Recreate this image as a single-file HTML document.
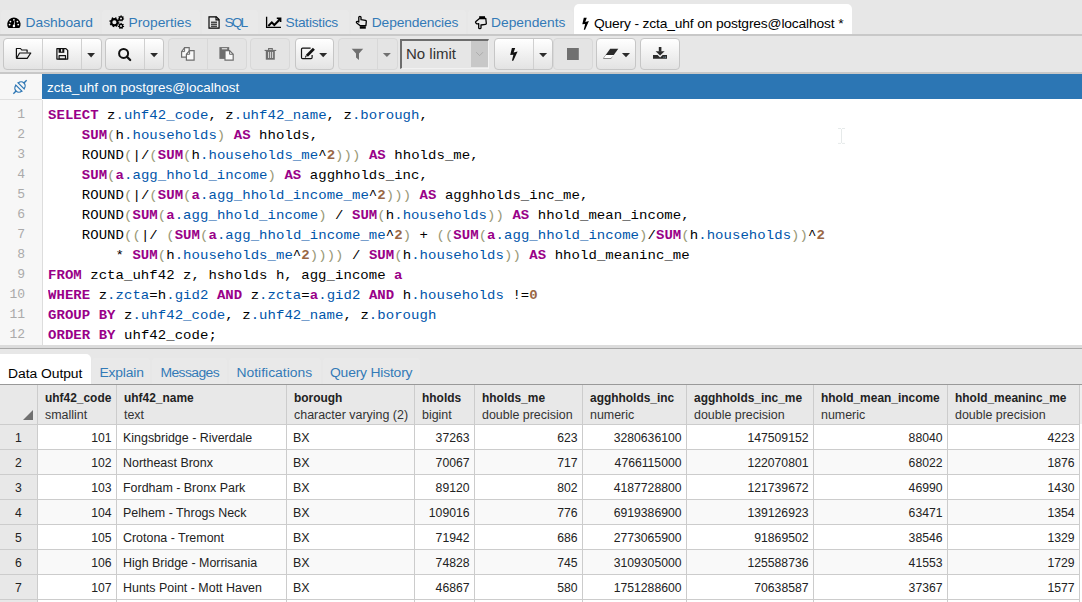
<!DOCTYPE html><html><head><meta charset="utf-8"><style>
*{box-sizing:border-box}
html,body{margin:0;padding:0}
body{width:1082px;height:602px;overflow:hidden;position:relative;background:#e7e7e7;font-family:"Liberation Sans", sans-serif;}
.a{position:absolute}
.t{position:absolute;white-space:pre;font-family:"Liberation Sans", sans-serif;}
.code{position:absolute;left:48px;white-space:pre;font-family:"Liberation Mono", monospace;font-size:14px;color:#000;letter-spacing:0.04px;transform:scaleY(0.9);transform-origin:0 13.7px}
.k{color:#990088;font-weight:bold}
.v{color:#0055aa}
.b{color:#999977}
.n{color:#996644;font-weight:bold}
.ln{position:absolute;width:25px;text-align:right;font-family:"Liberation Mono", monospace;font-size:13px;color:#aaa;margin-top:0px}
.btn{position:absolute;top:38px;height:32px;border:1px solid #c6c6c6;border-radius:4px;background:linear-gradient(#ffffff,#e3e3e3)}
.btnd{position:absolute;top:38px;height:32px;border:1px solid #d8d8d8;border-radius:4px;background:#e4e4e4}
.div{position:absolute;top:0;bottom:0;width:1px;background:#c6c6c6}
.hdr{position:absolute;top:385px;height:39px;background:#e8e8e8}
.cell{position:absolute;white-space:pre;font-family:"Liberation Sans", sans-serif;font-size:12.2px;color:#222}
</style></head><body><div class="a" style="left:0;top:0;width:1082px;height:34px;background:#e7e7e7"></div>
<div class="a" style="left:1px;top:10px;width:99px;height:24px;background:#e9e9e9;border-radius:4px 4px 0 0"></div>
<div class="a" style="left:102px;top:10px;width:98px;height:24px;background:#e9e9e9;border-radius:4px 4px 0 0"></div>
<div class="a" style="left:202px;top:10px;width:56px;height:24px;background:#e9e9e9;border-radius:4px 4px 0 0"></div>
<div class="a" style="left:260px;top:10px;width:89px;height:24px;background:#e9e9e9;border-radius:4px 4px 0 0"></div>
<div class="a" style="left:351px;top:10px;width:115px;height:24px;background:#e9e9e9;border-radius:4px 4px 0 0"></div>
<div class="a" style="left:468px;top:10px;width:105px;height:24px;background:#e9e9e9;border-radius:4px 4px 0 0"></div>
<div class="a" style="left:574px;top:4px;width:278px;height:30px;background:#fff;border-radius:5px 5px 0 0"></div>
<div class="a" style="left:0;top:34px;width:1082px;height:2px;background:#c8c8c8"></div>
<div class="t" style="left:25.5px;top:15px;font-size:13.8px;transform:scaleY(0.9);transform-origin:0 12.49px;color:#337ab7;letter-spacing:0px">Dashboard</div>
<div class="t" style="left:128.5px;top:15px;font-size:13.8px;transform:scaleY(0.9);transform-origin:0 12.49px;color:#337ab7;letter-spacing:0px">Properties</div>
<div class="t" style="left:224.5px;top:15px;font-size:13.8px;transform:scaleY(0.9);transform-origin:0 12.49px;color:#337ab7;letter-spacing:-2px">SQL</div>
<div class="t" style="left:285.5px;top:15px;font-size:13.8px;transform:scaleY(0.9);transform-origin:0 12.49px;color:#337ab7;letter-spacing:-0.28px">Statistics</div>
<div class="t" style="left:371.8px;top:15px;font-size:13.8px;transform:scaleY(0.9);transform-origin:0 12.49px;color:#337ab7;letter-spacing:-0.15px">Dependencies</div>
<div class="t" style="left:491px;top:15px;font-size:13.8px;transform:scaleY(0.9);transform-origin:0 12.49px;color:#337ab7;letter-spacing:0px">Dependents</div>
<div class="t" style="left:594px;top:16px;font-size:13.8px;transform:scaleY(0.9);transform-origin:0 12.49px;color:#000;letter-spacing:-0.155px">Query - zcta_uhf on postgres@localhost *</div>
<div class="a" style="left:0;top:72px;width:1082px;height:2px;background:#c8c8c8"></div>
<div class="btn" style="left:3px;width:99px"><div class="div" style="left:38px;background:#d0d0d0"></div><div class="div" style="left:77px;background:#d0d0d0"></div></div>
<div class="btn" style="left:105px;width:59px"><div class="div" style="left:38px;background:#d0d0d0"></div></div>
<div class="btnd" style="left:168px;width:79px"><div class="div" style="left:38px;background:#d8d8d8"></div></div>
<div class="btnd" style="left:250px;width:40px"></div>
<div class="btn" style="left:295px;width:39px"></div>
<div class="btnd" style="left:338px;width:60px"><div class="div" style="left:38px;background:#d8d8d8"></div></div>
<div class="btn" style="left:494px;width:59px"><div class="div" style="left:38px;background:#d0d0d0"></div></div>
<div class="btnd" style="left:553px;width:40px"></div>
<div class="btn" style="left:596px;width:40px"></div>
<div class="btn" style="left:640px;width:40px"></div>
<div class="a" style="left:400px;top:39px;width:89px;height:30px;background:#e6e6e6;border-top:2px solid #6d6d6d;border-left:2px solid #6d6d6d;border-right:1px solid #f2f2f2;border-bottom:1px solid #f2f2f2"></div>
<div class="a" style="left:471px;top:41px;width:17px;height:26px;background:#c8c8c8"></div>
<div class="t" style="left:406px;top:45px;font-size:15px;color:#333">No limit</div>
<div class="a" style="left:0;top:74px;width:42px;height:25px;background:#f7f7f7"></div>
<div class="a" style="left:42px;top:74px;width:1040px;height:25px;background:#2c76b4"></div>
<div class="t" style="left:47px;top:79.5px;font-size:13.5px;transform:scaleY(0.9);transform-origin:0 12.22px;color:#fff">zcta_uhf on postgres@localhost</div>
<div class="a" style="left:0;top:99px;width:42px;height:1px;background:#e0e0e0"></div>
<div class="a" style="left:42px;top:99px;width:1040px;height:246px;background:#fff"></div>
<div class="a" style="left:0;top:100px;width:43px;height:245px;background:#f7f7f7;border-right:1px solid #dddddd"></div>
<div class="ln" style="left:0;top:105px;height:20px;line-height:20px">1</div>
<div class="code" style="top:105px;height:20px;line-height:20px"><span class="k">SELECT</span> z<span class="v">.uhf42_code</span>, z<span class="v">.uhf42_name</span>, z<span class="v">.borough</span>,</div>
<div class="ln" style="left:0;top:125px;height:20px;line-height:20px">2</div>
<div class="code" style="top:125px;height:20px;line-height:20px">    <span class="k">SUM</span><span class="b">(</span>h<span class="v">.households</span><span class="b">)</span> <span class="k">AS</span> hholds,</div>
<div class="ln" style="left:0;top:145px;height:20px;line-height:20px">3</div>
<div class="code" style="top:145px;height:20px;line-height:20px">    ROUND<span class="b">(</span>|/<span class="b">(</span><span class="k">SUM</span><span class="b">(</span>h<span class="v">.households_me</span>^<span class="n">2</span><span class="b">)</span><span class="b">)</span><span class="b">)</span> <span class="k">AS</span> hholds_me,</div>
<div class="ln" style="left:0;top:165px;height:20px;line-height:20px">4</div>
<div class="code" style="top:165px;height:20px;line-height:20px">    <span class="k">SUM</span><span class="b">(</span><span class="k">a</span><span class="v">.agg_hhold_income</span><span class="b">)</span> <span class="k">AS</span> agghholds_inc,</div>
<div class="ln" style="left:0;top:185px;height:20px;line-height:20px">5</div>
<div class="code" style="top:185px;height:20px;line-height:20px">    ROUND<span class="b">(</span>|/<span class="b">(</span><span class="k">SUM</span><span class="b">(</span><span class="k">a</span><span class="v">.agg_hhold_income_me</span>^<span class="n">2</span><span class="b">)</span><span class="b">)</span><span class="b">)</span> <span class="k">AS</span> agghholds_inc_me,</div>
<div class="ln" style="left:0;top:205px;height:20px;line-height:20px">6</div>
<div class="code" style="top:205px;height:20px;line-height:20px">    ROUND<span class="b">(</span><span class="k">SUM</span><span class="b">(</span><span class="k">a</span><span class="v">.agg_hhold_income</span><span class="b">)</span> / <span class="k">SUM</span><span class="b">(</span>h<span class="v">.households</span><span class="b">)</span><span class="b">)</span> <span class="k">AS</span> hhold_mean_income,</div>
<div class="ln" style="left:0;top:225px;height:20px;line-height:20px">7</div>
<div class="code" style="top:225px;height:20px;line-height:20px">    ROUND<span class="b">(</span><span class="b">(</span>|/ <span class="b">(</span><span class="k">SUM</span><span class="b">(</span><span class="k">a</span><span class="v">.agg_hhold_income_me</span>^<span class="n">2</span><span class="b">)</span> + <span class="b">(</span><span class="b">(</span><span class="k">SUM</span><span class="b">(</span><span class="k">a</span><span class="v">.agg_hhold_income</span><span class="b">)</span>/<span class="k">SUM</span><span class="b">(</span>h<span class="v">.households</span><span class="b">)</span><span class="b">)</span>^<span class="n">2</span></div>
<div class="ln" style="left:0;top:245px;height:20px;line-height:20px">8</div>
<div class="code" style="top:245px;height:20px;line-height:20px">        * <span class="k">SUM</span><span class="b">(</span>h<span class="v">.households_me</span>^<span class="n">2</span><span class="b">)</span><span class="b">)</span><span class="b">)</span><span class="b">)</span> / <span class="k">SUM</span><span class="b">(</span>h<span class="v">.households</span><span class="b">)</span><span class="b">)</span> <span class="k">AS</span> hhold_meaninc_me</div>
<div class="ln" style="left:0;top:265px;height:20px;line-height:20px">9</div>
<div class="code" style="top:265px;height:20px;line-height:20px"><span class="k">FROM</span> zcta_uhf42 z, hsholds h, agg_income <span class="k">a</span></div>
<div class="ln" style="left:0;top:285px;height:20px;line-height:20px">10</div>
<div class="code" style="top:285px;height:20px;line-height:20px"><span class="k">WHERE</span> z<span class="v">.zcta</span>=h<span class="v">.gid2</span> <span class="k">AND</span> z<span class="v">.zcta</span>=<span class="k">a</span><span class="v">.gid2</span> <span class="k">AND</span> h<span class="v">.households</span> !=<span class="n">0</span></div>
<div class="ln" style="left:0;top:305px;height:20px;line-height:20px">11</div>
<div class="code" style="top:305px;height:20px;line-height:20px"><span class="k">GROUP</span> <span class="k">BY</span> z<span class="v">.uhf42_code</span>, z<span class="v">.uhf42_name</span>, z<span class="v">.borough</span></div>
<div class="ln" style="left:0;top:325px;height:20px;line-height:20px">12</div>
<div class="code" style="top:325px;height:20px;line-height:20px"><span class="k">ORDER</span> <span class="k">BY</span> uhf42_code;</div>
<div class="a" style="left:0;top:345px;width:1082px;height:3px;background:#dcdcdc"></div>
<div class="a" style="left:0;top:348px;width:1082px;height:1px;background:#a8a8a8"></div>
<div class="a" style="left:0;top:354px;width:91px;height:31px;background:#fff;border-radius:0 5px 0 0"></div>
<div class="a" style="left:92px;top:358px;width:58px;height:26px;background:#e9e9e9;border-radius:4px 4px 0 0"></div>
<div class="a" style="left:152px;top:358px;width:75px;height:26px;background:#e9e9e9;border-radius:4px 4px 0 0"></div>
<div class="a" style="left:229px;top:358px;width:92px;height:26px;background:#e9e9e9;border-radius:4px 4px 0 0"></div>
<div class="a" style="left:323px;top:358px;width:97px;height:26px;background:#e9e9e9;border-radius:4px 4px 0 0"></div>
<div class="t" style="left:8px;top:364.5px;font-size:13.9px;transform:scaleY(0.9);transform-origin:0 12.58px;color:#000;letter-spacing:-0.05px">Data Output</div>
<div class="t" style="left:99.5px;top:364px;font-size:13.9px;transform:scaleY(0.9);transform-origin:0 12.58px;color:#337ab7;letter-spacing:-0.2px">Explain</div>
<div class="t" style="left:160.5px;top:364px;font-size:13.9px;transform:scaleY(0.9);transform-origin:0 12.58px;color:#337ab7;letter-spacing:-0.6px">Messages</div>
<div class="t" style="left:236.5px;top:364px;font-size:13.9px;transform:scaleY(0.9);transform-origin:0 12.58px;color:#337ab7;letter-spacing:0px">Notifications</div>
<div class="t" style="left:330px;top:364px;font-size:13.9px;transform:scaleY(0.9);transform-origin:0 12.58px;color:#337ab7;letter-spacing:-0.2px">Query History</div>
<div class="a" style="left:0;top:384px;width:1082px;height:218px;background:#fff"></div>
<div class="a" style="left:0;top:384px;width:1082px;height:1px;background:#999"></div>
<div class="a" style="left:1080px;top:385px;width:2px;height:39px;background:#efefef"></div>
<div class="a" style="left:0;top:385px;width:1079px;height:39px;background:#e8e8e8"></div>
<div class="a" style="left:0;top:424px;width:37px;height:178px;background:#e8e8e8"></div>
<div class="a" style="left:37px;top:450px;width:1042px;height:24px;background:#f9f9f9"></div>
<div class="a" style="left:37px;top:500px;width:1042px;height:24px;background:#f9f9f9"></div>
<div class="a" style="left:37px;top:550px;width:1042px;height:24px;background:#f9f9f9"></div>
<div class="a" style="left:0;top:424px;width:1079px;height:1px;background:#cccccc"></div>
<div class="a" style="left:0;top:449px;width:1079px;height:1px;background:#cccccc"></div>
<div class="a" style="left:0;top:474px;width:1079px;height:1px;background:#cccccc"></div>
<div class="a" style="left:0;top:499px;width:1079px;height:1px;background:#cccccc"></div>
<div class="a" style="left:0;top:524px;width:1079px;height:1px;background:#cccccc"></div>
<div class="a" style="left:0;top:549px;width:1079px;height:1px;background:#cccccc"></div>
<div class="a" style="left:0;top:574px;width:1079px;height:1px;background:#cccccc"></div>
<div class="a" style="left:0;top:599px;width:1079px;height:1px;background:#cccccc"></div>
<div class="a" style="left:37px;top:385px;width:1px;height:217px;background:#cccccc"></div>
<div class="a" style="left:116px;top:385px;width:1px;height:217px;background:#cccccc"></div>
<div class="a" style="left:286px;top:385px;width:1px;height:217px;background:#cccccc"></div>
<div class="a" style="left:414px;top:385px;width:1px;height:217px;background:#cccccc"></div>
<div class="a" style="left:474px;top:385px;width:1px;height:217px;background:#cccccc"></div>
<div class="a" style="left:582px;top:385px;width:1px;height:217px;background:#cccccc"></div>
<div class="a" style="left:686px;top:385px;width:1px;height:217px;background:#cccccc"></div>
<div class="a" style="left:813px;top:385px;width:1px;height:217px;background:#cccccc"></div>
<div class="a" style="left:947px;top:385px;width:1px;height:217px;background:#cccccc"></div>
<div class="a" style="left:1079px;top:385px;width:1px;height:217px;background:#cccccc"></div>
<svg class="a" style="left:23px;top:410px" width="11" height="10"><path d="M10 0 L10 10 L0 10 Z" fill="#707070"/></svg>
<div class="t" style="left:45px;top:391.2px;font-size:11.95px;font-weight:bold;color:#222">uhf42_code</div>
<div class="t" style="left:45px;top:407.5px;font-size:12.45px;color:#333">smallint</div>
<div class="t" style="left:124px;top:391.2px;font-size:11.95px;font-weight:bold;color:#222">uhf42_name</div>
<div class="t" style="left:124px;top:407.5px;font-size:12.45px;color:#333">text</div>
<div class="t" style="left:294px;top:391.2px;font-size:11.95px;font-weight:bold;color:#222">borough</div>
<div class="t" style="left:294px;top:407.5px;font-size:12.45px;color:#333">character varying (2)</div>
<div class="t" style="left:422px;top:391.2px;font-size:11.95px;font-weight:bold;color:#222">hholds</div>
<div class="t" style="left:422px;top:407.5px;font-size:12.45px;color:#333">bigint</div>
<div class="t" style="left:482px;top:391.2px;font-size:11.95px;font-weight:bold;color:#222">hholds_me</div>
<div class="t" style="left:482px;top:407.5px;font-size:12.45px;color:#333">double precision</div>
<div class="t" style="left:590px;top:391.2px;font-size:11.95px;font-weight:bold;color:#222">agghholds_inc</div>
<div class="t" style="left:590px;top:407.5px;font-size:12.45px;color:#333">numeric</div>
<div class="t" style="left:694px;top:391.2px;font-size:11.95px;font-weight:bold;color:#222">agghholds_inc_me</div>
<div class="t" style="left:694px;top:407.5px;font-size:12.45px;color:#333">double precision</div>
<div class="t" style="left:821px;top:391.2px;font-size:11.95px;font-weight:bold;color:#222">hhold_mean_income</div>
<div class="t" style="left:821px;top:407.5px;font-size:12.45px;color:#333">numeric</div>
<div class="t" style="left:955px;top:391.2px;font-size:11.95px;font-weight:bold;color:#222">hhold_meaninc_me</div>
<div class="t" style="left:955px;top:407.5px;font-size:12.45px;color:#333">double precision</div>
<div class="cell" style="left:0;width:37px;text-align:center;top:431px">1</div>
<div class="cell" style="left:37px;width:74.5px;text-align:right;top:431px">101</div>
<div class="cell" style="left:123px;top:430.8px;font-size:12.45px">Kingsbridge - Riverdale</div>
<div class="cell" style="left:293px;top:430.8px;font-size:12.45px">BX</div>
<div class="cell" style="left:414px;width:55.5px;text-align:right;top:431px">37263</div>
<div class="cell" style="left:474px;width:103.5px;text-align:right;top:431px">623</div>
<div class="cell" style="left:582px;width:99.5px;text-align:right;top:431px">3280636100</div>
<div class="cell" style="left:686px;width:122.5px;text-align:right;top:431px">147509152</div>
<div class="cell" style="left:813px;width:129.5px;text-align:right;top:431px">88040</div>
<div class="cell" style="left:947px;width:127.5px;text-align:right;top:431px">4223</div>
<div class="cell" style="left:0;width:37px;text-align:center;top:456px">2</div>
<div class="cell" style="left:37px;width:74.5px;text-align:right;top:456px">102</div>
<div class="cell" style="left:123px;top:455.8px;font-size:12.45px">Northeast Bronx</div>
<div class="cell" style="left:293px;top:455.8px;font-size:12.45px">BX</div>
<div class="cell" style="left:414px;width:55.5px;text-align:right;top:456px">70067</div>
<div class="cell" style="left:474px;width:103.5px;text-align:right;top:456px">717</div>
<div class="cell" style="left:582px;width:99.5px;text-align:right;top:456px">4766115000</div>
<div class="cell" style="left:686px;width:122.5px;text-align:right;top:456px">122070801</div>
<div class="cell" style="left:813px;width:129.5px;text-align:right;top:456px">68022</div>
<div class="cell" style="left:947px;width:127.5px;text-align:right;top:456px">1876</div>
<div class="cell" style="left:0;width:37px;text-align:center;top:481px">3</div>
<div class="cell" style="left:37px;width:74.5px;text-align:right;top:481px">103</div>
<div class="cell" style="left:123px;top:480.8px;font-size:12.45px">Fordham - Bronx Park</div>
<div class="cell" style="left:293px;top:480.8px;font-size:12.45px">BX</div>
<div class="cell" style="left:414px;width:55.5px;text-align:right;top:481px">89120</div>
<div class="cell" style="left:474px;width:103.5px;text-align:right;top:481px">802</div>
<div class="cell" style="left:582px;width:99.5px;text-align:right;top:481px">4187728800</div>
<div class="cell" style="left:686px;width:122.5px;text-align:right;top:481px">121739672</div>
<div class="cell" style="left:813px;width:129.5px;text-align:right;top:481px">46990</div>
<div class="cell" style="left:947px;width:127.5px;text-align:right;top:481px">1430</div>
<div class="cell" style="left:0;width:37px;text-align:center;top:506px">4</div>
<div class="cell" style="left:37px;width:74.5px;text-align:right;top:506px">104</div>
<div class="cell" style="left:123px;top:505.8px;font-size:12.45px">Pelhem - Throgs Neck</div>
<div class="cell" style="left:293px;top:505.8px;font-size:12.45px">BX</div>
<div class="cell" style="left:414px;width:55.5px;text-align:right;top:506px">109016</div>
<div class="cell" style="left:474px;width:103.5px;text-align:right;top:506px">776</div>
<div class="cell" style="left:582px;width:99.5px;text-align:right;top:506px">6919386900</div>
<div class="cell" style="left:686px;width:122.5px;text-align:right;top:506px">139126923</div>
<div class="cell" style="left:813px;width:129.5px;text-align:right;top:506px">63471</div>
<div class="cell" style="left:947px;width:127.5px;text-align:right;top:506px">1354</div>
<div class="cell" style="left:0;width:37px;text-align:center;top:531px">5</div>
<div class="cell" style="left:37px;width:74.5px;text-align:right;top:531px">105</div>
<div class="cell" style="left:123px;top:530.8px;font-size:12.45px">Crotona - Tremont</div>
<div class="cell" style="left:293px;top:530.8px;font-size:12.45px">BX</div>
<div class="cell" style="left:414px;width:55.5px;text-align:right;top:531px">71942</div>
<div class="cell" style="left:474px;width:103.5px;text-align:right;top:531px">686</div>
<div class="cell" style="left:582px;width:99.5px;text-align:right;top:531px">2773065900</div>
<div class="cell" style="left:686px;width:122.5px;text-align:right;top:531px">91869502</div>
<div class="cell" style="left:813px;width:129.5px;text-align:right;top:531px">38546</div>
<div class="cell" style="left:947px;width:127.5px;text-align:right;top:531px">1329</div>
<div class="cell" style="left:0;width:37px;text-align:center;top:556px">6</div>
<div class="cell" style="left:37px;width:74.5px;text-align:right;top:556px">106</div>
<div class="cell" style="left:123px;top:555.8px;font-size:12.45px">High Bridge - Morrisania</div>
<div class="cell" style="left:293px;top:555.8px;font-size:12.45px">BX</div>
<div class="cell" style="left:414px;width:55.5px;text-align:right;top:556px">74828</div>
<div class="cell" style="left:474px;width:103.5px;text-align:right;top:556px">745</div>
<div class="cell" style="left:582px;width:99.5px;text-align:right;top:556px">3109305000</div>
<div class="cell" style="left:686px;width:122.5px;text-align:right;top:556px">125588736</div>
<div class="cell" style="left:813px;width:129.5px;text-align:right;top:556px">41553</div>
<div class="cell" style="left:947px;width:127.5px;text-align:right;top:556px">1729</div>
<div class="cell" style="left:0;width:37px;text-align:center;top:581px">7</div>
<div class="cell" style="left:37px;width:74.5px;text-align:right;top:581px">107</div>
<div class="cell" style="left:123px;top:580.8px;font-size:12.45px">Hunts Point - Mott Haven</div>
<div class="cell" style="left:293px;top:580.8px;font-size:12.45px">BX</div>
<div class="cell" style="left:414px;width:55.5px;text-align:right;top:581px">46867</div>
<div class="cell" style="left:474px;width:103.5px;text-align:right;top:581px">580</div>
<div class="cell" style="left:582px;width:99.5px;text-align:right;top:581px">1751288600</div>
<div class="cell" style="left:686px;width:122.5px;text-align:right;top:581px">70638587</div>
<div class="cell" style="left:813px;width:129.5px;text-align:right;top:581px">37367</div>
<div class="cell" style="left:947px;width:127.5px;text-align:right;top:581px">1577</div>

<svg class="a" style="left:0;top:0" width="1082" height="602" viewBox="0 0 1082 602">
<g fill="#000">
 <path d="M8.4 28 A6.7 6.7 0 1 1 19.4 28 Z"/>
 <g fill="#fff"><circle cx="10.4" cy="21.6" r="0.9"/><circle cx="13.9" cy="19.8" r="0.9"/><circle cx="17.4" cy="21.6" r="0.9"/><circle cx="9.6" cy="24.6" r="0.9"/><circle cx="18.2" cy="24.6" r="0.9"/><circle cx="13.9" cy="26" r="1.2"/></g>
 <path d="M13.4 25.8 L14.6 21 L15 21.1 L14.5 26 Z" fill="#fff"/>
</g>
<g>
 <circle cx="114.4" cy="22.2" r="3.1" fill="none" stroke="#000" stroke-width="2.1"/>
 <circle cx="114.4" cy="22.2" r="4.3" fill="none" stroke="#000" stroke-width="1.5" stroke-dasharray="1.5 1.9"/>
 <circle cx="121" cy="18.5" r="1.7" fill="none" stroke="#000" stroke-width="1.4"/>
 <circle cx="121" cy="18.5" r="2.6" fill="none" stroke="#000" stroke-width="1.1" stroke-dasharray="1.1 1.2"/>
 <circle cx="121" cy="26" r="1.7" fill="none" stroke="#000" stroke-width="1.4"/>
 <circle cx="121" cy="26" r="2.6" fill="none" stroke="#000" stroke-width="1.1" stroke-dasharray="1.1 1.2"/>
</g>
<g fill="none" stroke="#000" stroke-width="1.15">
 <path d="M209 16.8 H216.3 L219.1 19.6 V28.1 H209 Z"/>
 <path d="M216 16.8 V19.9 H219.1" stroke-width="1.1"/>
 <path d="M211 22.2 H217 M211 24.2 H217 M211 26.2 H217" stroke-width="1"/>
</g>
<g fill="none" stroke="#000">
 <path d="M266.6 16.7 V27.4 H281" stroke-width="1.3"/>
 <path d="M268.3 26 L271.8 22.4 L274.3 25 L279 20.2" stroke-width="2"/>
 <path d="M276.8 18.2 H280.6 V22" stroke-width="1.6" fill="#000"/>
</g>
<g fill="none" stroke="#000" stroke-width="1.3" stroke-linejoin="round">
 <path d="M358.8 22 V17.3 Q358.8 16.3 359.9 16.3 Q361 16.3 361 17.3 V19.7 L365.5 20.3 Q366.4 20.5 366.3 21.4 L365.9 25.7 H360.3 L356.7 22.9 Q356 22.2 356.8 21.6 Q357.6 21.1 358.8 22 Z"/>
 <rect x="359.8" y="26.2" width="6" height="2.5" fill="#000" stroke="none"/>
 <path d="M479.5 18.5 H485.8 L486.3 23.5 Q486.3 24.3 485.5 24.4 L481 25 V27.8 Q481 28.7 479.8 28.7 Q478.7 28.7 478.7 27.8 V23.6 Q477.5 24.3 476.5 23.6 L475.7 22.7 Q475.2 22 475.9 21.4 L479.5 18.5 Z"/>
 <rect x="479.2" y="16.2" width="5.8" height="2.4" fill="#000" stroke="none"/>
</g>
<path d="M583.8 17.7 L586.75 17.7 L585.3 22.05 L588.9 20.9 L585.05 29.8 L583.8 29.8 L585.15 24.1 L582.3 24.3 Z" fill="#000"/>

<!-- toolbar -->
<g fill="none" stroke="#111" stroke-width="1.3" stroke-linejoin="round">
 <path d="M16.4 58.2 V48.5 H20.5 L21.7 50 H27.1 V52.6" stroke-width="1.2"/>
 <path d="M16.6 58.3 L19.6 53 H30.8 L27.2 58.3 Z" stroke-width="1.2"/>
 <path d="M56.9 48.6 H65.9 L67.7 50.4 V59 H56.9 Z" stroke-width="1.25"/>
 <rect x="59.1" y="55.7" width="6.4" height="3.3" stroke-width="1.2"/>
</g>
<rect x="58.6" y="48.4" width="5.7" height="4.4" fill="#111"/>
<rect x="61.1" y="49.1" width="1.2" height="2.6" fill="#fff"/>
<g fill="#2b2b2b">
 <path d="M87.2 53 H95 L91.1 57.4 Z"/>
 <path d="M150.2 53 H158 L154.1 57.2 Z"/>
 <path d="M319.2 53 H327.2 L323.2 57.2 Z"/>
 <path d="M539.1 53 H547.1 L543.1 57.3 Z"/>
 <path d="M621.9 53 H630 L626 57.2 Z"/>
</g>
<path d="M382.9 53 H390.9 L386.9 57.1 Z" fill="#707070"/>
<circle cx="123.6" cy="53.4" r="4.5" fill="none" stroke="#111" stroke-width="2"/>
<path d="M126.8 56.6 L130.2 60" stroke="#111" stroke-width="2.2" stroke-linecap="round"/>
<g fill="#f9f9f9" stroke="#6e6e6e" stroke-width="1.2" stroke-linejoin="miter">
 <path d="M181.6 57.1 V51.6 L184.6 47.6 H189.2 V57.1 Z"/>
 <path d="M184.6 47.6 V51.6 H181.6" fill="none" stroke-width="1"/>
 <path d="M186.4 60.1 V54.3 L189.6 50.6 H194.1 V60.1 Z"/>
 <path d="M189.6 50.6 V54.3 H186.4" fill="none" stroke-width="1"/>
</g>
<g>
 <rect x="219.4" y="47.1" width="9.8" height="11.8" fill="#6e6e6e"/>
 <rect x="221.8" y="48.2" width="5.4" height="1.1" fill="#eeeeee"/>
 <path d="M225 50.6 H229.6 L233.2 54.3 V60.1 H225 Z" fill="#f9f9f9" stroke="#6e6e6e" stroke-width="1.2"/>
 <path d="M229.6 50.6 V54.3 H233.2" fill="none" stroke="#6e6e6e" stroke-width="1"/>
</g>
<g>
 <path d="M268.6 50.4 V48.6 H272.3 V50.4" fill="none" stroke="#6e6e6e" stroke-width="1.1"/>
 <rect x="264.6" y="49.9" width="11.6" height="1.1" fill="#6e6e6e"/>
 <rect x="265.8" y="50.8" width="9" height="8.9" fill="#6e6e6e"/>
 <rect x="268.1" y="51.9" width="1" height="6.1" fill="#dcdcdc"/>
 <rect x="270.1" y="51.9" width="1" height="6.1" fill="#dcdcdc"/>
 <rect x="272.1" y="51.9" width="1" height="6.1" fill="#dcdcdc"/>
</g>
<g fill="none" stroke="#111" stroke-linejoin="round">
 <path d="M310.6 48.1 H302.6 Q301.5 48.1 301.5 49.2 V57.5 Q301.5 58.6 302.6 58.6 H311 Q312.1 58.6 312.1 57.5 V55" stroke-width="1.2"/>
 <path d="M306.9 55.8 L313.9 48.8" stroke-width="2.8"/>
 <path d="M305.3 57.4 L306.4 55.4" stroke-width="1.1"/>
</g>
<path d="M351.7 48.8 H363.2 L359 53.6 V59.9 L356 57.6 V53.6 Z" fill="#707070"/>
<path d="M511.9 48 L515.2 48 L513.6 52.6 L517.6 51.4 L513.3 60.8 L511.9 60.8 L513.4 54.8 L510.2 55 Z" fill="#111"/>
<rect x="567" y="48" width="11.8" height="12" fill="#707070"/>
<g>
 <path d="M610.2 48.8 H618.3 L611.2 58.6 H603.1 Z" fill="#2b2b2b"/>
 <path d="M605.8 55 H614.5 L611.1 57.9 H603.8 Z" fill="#fff"/>
</g>
<g fill="#2b2b2b">
 <rect x="658.8" y="47" width="2.6" height="4.6"/>
 <path d="M655.6 51.3 H664.6 L660.1 55.6 Z"/>
 <path d="M653 55 H657.6 L660.1 57.4 L662.6 55 H667 V58.8 H653 Z"/>
</g>
<rect x="663.4" y="56.6" width="1" height="1" fill="#8ab"/>
<rect x="665" y="56.6" width="1" height="1" fill="#8ab"/>

<path d="M838 128.5 H841 M842 128.5 H845 M841.5 129 V143 M838 143.4 H841 M842 143.4 H845" stroke="#e6eaea" stroke-width="1"/>
<!-- plug -->
<g transform="rotate(-45 20 87)" stroke="#2c76b4" stroke-width="1.25" fill="none">
 <path d="M18.4 83 A4 4 0 0 0 18.4 91"/>
 <path d="M18.4 82 V92"/>
 <path d="M21.6 83 A4 4 0 0 1 21.6 91"/>
 <path d="M21.6 82 V92"/>
 <path d="M10.6 87 H14.4 M25.6 87 H29.4" stroke-width="1.4"/>
</g>
<path d="M476.2 52.2 L479.6 55.6 L483 52.2" fill="none" stroke="#a8a8a8" stroke-width="0.9"/>
</svg>
</body></html>
